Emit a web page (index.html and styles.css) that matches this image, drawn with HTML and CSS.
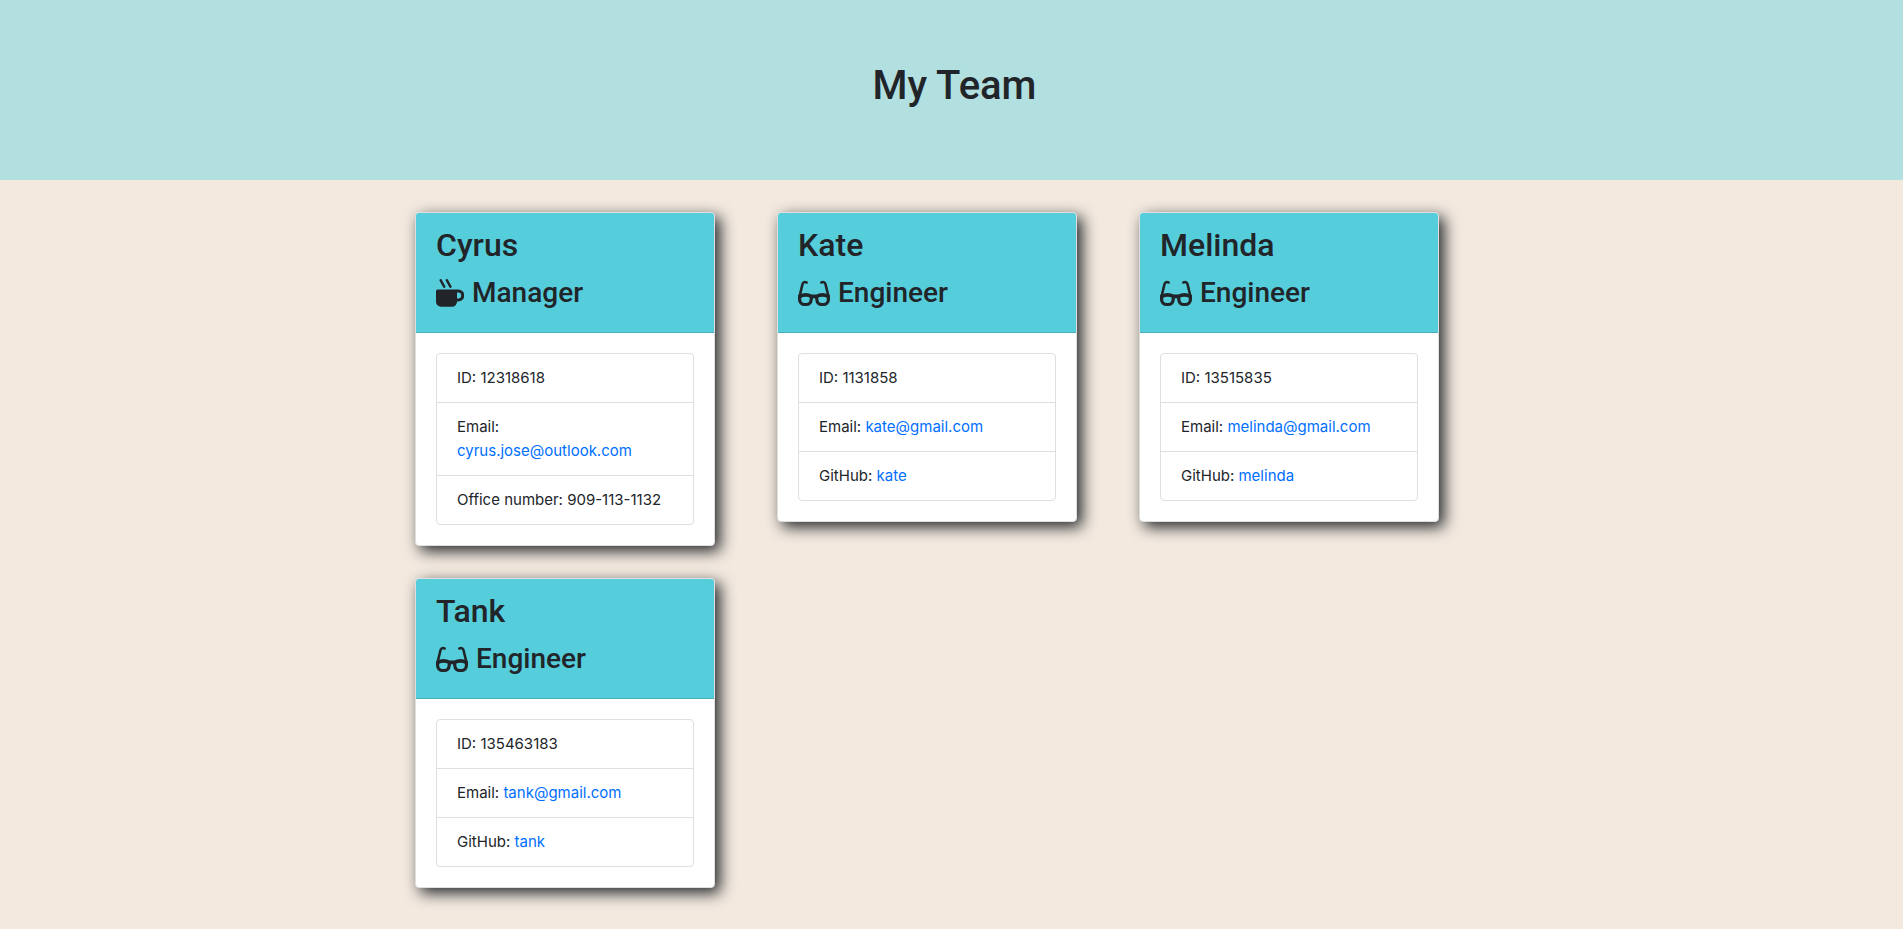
FILE: index.html
```html
<!DOCTYPE html>
<html lang="en">
<head>
<meta charset="utf-8">
<meta name="viewport" content="width=device-width, initial-scale=1">
<title>My Team</title>
<link rel="stylesheet" href="styles.css">
</head>
<body>
<svg class="sprite" aria-hidden="true">
  <symbol id="mug" viewBox="0 0 28 28">
    <path d="M4.600 1.200l3.600 6.500M10.800 1.200l3.600 6.500" fill="none" stroke="currentColor" stroke-width="2.400" stroke-linecap="round"/>
    <path fill="currentColor" fill-rule="evenodd" d="M1.400 10.500H22.300a5.700 5.700 0 0 1 0 12H21a5 5 0 0 1-5 5.300H5a5 5 0 0 1-5-5V12a1.500 1.500 0 0 1 1.400-1.500ZM21 13.600v5.800h1.300a2.900 2.900 0 0 0 0-5.800Z"/>
  </symbol>
  <symbol id="glasses" viewBox="0 0 32 28">
    <g fill="none" stroke="currentColor" stroke-width="2.600" stroke-linecap="round">
      <path d="M8.600 3.500C6.200 2.500 4.900 3.300 4.400 5.500L1.400 18M23.400 3.500c2.400-1 3.700-.2 4.200 2L30.600 18"/>
      <path stroke-width="3.600" d="M1.800 17.500C5 15.600 10 15.600 13.500 17.400h5C22 15.600 27 15.600 30.200 17.500"/>
      <path stroke-width="3.200" d="M1.600 17v3.500a5 5 0 0 0 5 5h1.700a4.800 4.800 0 0 0 4.800-4.400l.4-3.600M30.400 17v3.500a5 5 0 0 1-5 5h-1.700a4.800 4.800 0 0 1-4.800-4.400l-.4-3.600"/>
    </g>
  </symbol>
</svg>
<header class="banner"><h1>My Team</h1></header>
<main class="team">
  <article class="card">
    <div class="card-header">
      <h2>Cyrus</h2>
      <h3><svg class="icon icon-mug" aria-hidden="true"><use href="#mug"/></svg>Manager</h3>
    </div>
    <ul class="details">
      <li>ID: 12318618</li>
      <li>Email: <a href="mailto:cyrus.jose@outlook.com">cyrus.jose@outlook.com</a></li>
      <li>Office number: 909-113-1132</li>
    </ul>
  </article>
  <article class="card">
    <div class="card-header">
      <h2>Kate</h2>
      <h3><svg class="icon icon-glasses" aria-hidden="true"><use href="#glasses"/></svg>Engineer</h3>
    </div>
    <ul class="details">
      <li>ID: 1131858</li>
      <li>Email: <a href="mailto:kate@gmail.com">kate@gmail.com</a></li>
      <li>GitHub: <a href="https://github.com/kate">kate</a></li>
    </ul>
  </article>
  <article class="card">
    <div class="card-header">
      <h2>Melinda</h2>
      <h3><svg class="icon icon-glasses" aria-hidden="true"><use href="#glasses"/></svg>Engineer</h3>
    </div>
    <ul class="details">
      <li>ID: 13515835</li>
      <li>Email: <a href="mailto:melinda@gmail.com">melinda@gmail.com</a></li>
      <li>GitHub: <a href="https://github.com/melinda">melinda</a></li>
    </ul>
  </article>
  <article class="card">
    <div class="card-header">
      <h2>Tank</h2>
      <h3><svg class="icon icon-glasses" aria-hidden="true"><use href="#glasses"/></svg>Engineer</h3>
    </div>
    <ul class="details">
      <li>ID: 135463183</li>
      <li>Email: <a href="mailto:tank@gmail.com">tank@gmail.com</a></li>
      <li>GitHub: <a href="https://github.com/tank">tank</a></li>
    </ul>
  </article>
</main>
</body>
</html>
```
FILE: styles.css
```css
* { box-sizing: border-box; }
body {
  margin: 0;
  background: #f3e9df;
  color: #212529;
  font-family: Inter, "Liberation Sans", sans-serif;
  font-size: 15px;
  line-height: 24px;
}
h1, h2, h3 { margin: 0; font-family: Roboto, "Liberation Sans", sans-serif; font-weight: 500; }
a { color: #006fff; text-decoration: none; }
a:hover { text-decoration: underline; }
.sprite { display: none; }

.banner { padding: 62px 32px 70px 38px; background: #b2dfdf; text-align: center; }
.banner h1 { font-size: 40px; line-height: 48px; }

.team {
  display: flex;
  flex-wrap: wrap;
  align-items: flex-start;
  gap: 32px 62px;
  max-width: 1073px;
  margin: 0 auto;
  padding: 32px 0;
}
.card {
  width: 300px;
  border: 1px solid #dfdfdf;
  border-radius: 4px;
  background: #fff;
  box-shadow: 5px 5px 15px #212529;
}
.card-header {
  padding: 13px 20px 22px;
  border-bottom: 1px solid #4ab1bd;
  border-radius: 3px 3px 0 0;
  background: #56cddb;
}
.card-header h2 { margin-bottom: 12px; font-size: 32px; line-height: 38px; }
.card-header h3 {
  display: flex;
  align-items: center;
  gap: 8px;
  font-size: 28px;
  line-height: 34px;
}
.icon { height: 28px; }
.icon-mug { width: 28px; }
.icon-glasses { width: 32px; }

.details {
  margin: 20px;
  padding: 0;
  list-style: none;
  border: 1px solid #dfdfdf;
  border-radius: 4px;
}
.details li { padding: 12px 20px; }
.details li + li { border-top: 1px solid #dfdfdf; }
```
